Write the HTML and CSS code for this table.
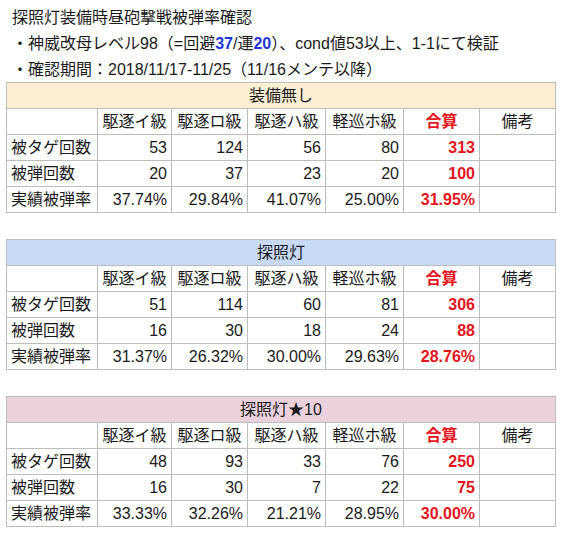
FILE: index.html
```html
<!DOCTYPE html>
<html lang="ja">
<head>
<meta charset="utf-8">
<title>探照灯装備時昼砲撃戦被弾率確認</title>
<link rel="stylesheet" href="styles.css">
</head>
<body>
<div class="page">
  <div class="line title">探照灯装備時昼砲撃戦被弾率確認</div>
  <div class="line">・神威改母レベル98（=回避<b class="blue">37</b>/運<b class="blue">20</b>）、cond値53以上、1-1にて検証</div>
  <div class="line">・確認期間：2018/11/17-11/25（11/16メンテ以降）</div>

  <table class="stats">
    <colgroup><col class="c0"><col class="c1"><col class="c2"><col class="c3"><col class="c4"><col class="c5"><col class="c6"></colgroup>
    <tr><th colspan="7" class="cap orange">装備無し</th></tr>
    <tr class="head"><td></td><td>駆逐イ級</td><td>駆逐ロ級</td><td>駆逐ハ級</td><td>軽巡ホ級</td><td class="red">合算</td><td>備考</td></tr>
    <tr><td class="lbl">被タゲ回数</td><td>53</td><td>124</td><td>56</td><td>80</td><td class="red">313</td><td></td></tr>
    <tr><td class="lbl">被弾回数</td><td>20</td><td>37</td><td>23</td><td>20</td><td class="red">100</td><td></td></tr>
    <tr><td class="lbl">実績被弾率</td><td>37.74%</td><td>29.84%</td><td>41.07%</td><td>25.00%</td><td class="red">31.95%</td><td></td></tr>
  </table>

  <table class="stats">
    <colgroup><col class="c0"><col class="c1"><col class="c2"><col class="c3"><col class="c4"><col class="c5"><col class="c6"></colgroup>
    <tr><th colspan="7" class="cap blue-bg">探照灯</th></tr>
    <tr class="head"><td></td><td>駆逐イ級</td><td>駆逐ロ級</td><td>駆逐ハ級</td><td>軽巡ホ級</td><td class="red">合算</td><td>備考</td></tr>
    <tr><td class="lbl">被タゲ回数</td><td>51</td><td>114</td><td>60</td><td>81</td><td class="red">306</td><td></td></tr>
    <tr><td class="lbl">被弾回数</td><td>16</td><td>30</td><td>18</td><td>24</td><td class="red">88</td><td></td></tr>
    <tr><td class="lbl">実績被弾率</td><td>31.37%</td><td>26.32%</td><td>30.00%</td><td>29.63%</td><td class="red">28.76%</td><td></td></tr>
  </table>

  <table class="stats">
    <colgroup><col class="c0"><col class="c1"><col class="c2"><col class="c3"><col class="c4"><col class="c5"><col class="c6"></colgroup>
    <tr><th colspan="7" class="cap pink">探照灯★10</th></tr>
    <tr class="head"><td></td><td>駆逐イ級</td><td>駆逐ロ級</td><td>駆逐ハ級</td><td>軽巡ホ級</td><td class="red">合算</td><td>備考</td></tr>
    <tr><td class="lbl">被タゲ回数</td><td>48</td><td>93</td><td>33</td><td>76</td><td class="red">250</td><td></td></tr>
    <tr><td class="lbl">被弾回数</td><td>16</td><td>30</td><td>7</td><td>22</td><td class="red">75</td><td></td></tr>
    <tr><td class="lbl">実績被弾率</td><td>33.33%</td><td>32.26%</td><td>21.21%</td><td>28.95%</td><td class="red">30.00%</td><td></td></tr>
  </table>
</div>
</body>
</html>
```

FILE: styles.css
```css
html, body {
  margin: 0;
  padding: 0;
  background: #ffffff;
}
body {
  font-family: "Liberation Sans", "Noto Sans CJK JP", sans-serif;
  font-size: 16px;
  color: #1a1a1a;
}
.page {
  padding: 5px 0 0 6px;
}
.line {
  line-height: 26px;
  padding-left: 6px;
  white-space: nowrap;
}
.blue {
  color: #1f35d6;
  font-weight: bold;
}
.stats {
  border-collapse: collapse;
  table-layout: fixed;
  width: 549px;
  margin-bottom: 26px;
}
.stats:first-of-type {
  margin-top: -1px;
}
.c0 { width: 91px; }
.c1 { width: 74px; }
.c2 { width: 76px; }
.c3 { width: 78px; }
.c4 { width: 78px; }
.c5 { width: 76px; }
.c6 { width: 76px; }
.stats th,
.stats td {
  border: 1px solid #bdbdbd;
  height: 25px;
  line-height: 25px;
  padding: 0 4px;
  white-space: nowrap;
  overflow: visible;
  text-align: right;
  font-weight: normal;
}
.stats th.cap {
  text-align: center;
}
.orange { background: #fdefd3; }
.blue-bg { background: #c9daf8; }
.pink { background: #ead1dc; }
.stats .head td {
  text-align: center;
}
.stats td.lbl {
  text-align: left;
}
.stats td.red {
  color: #e3141b;
  font-weight: bold;
}
```
